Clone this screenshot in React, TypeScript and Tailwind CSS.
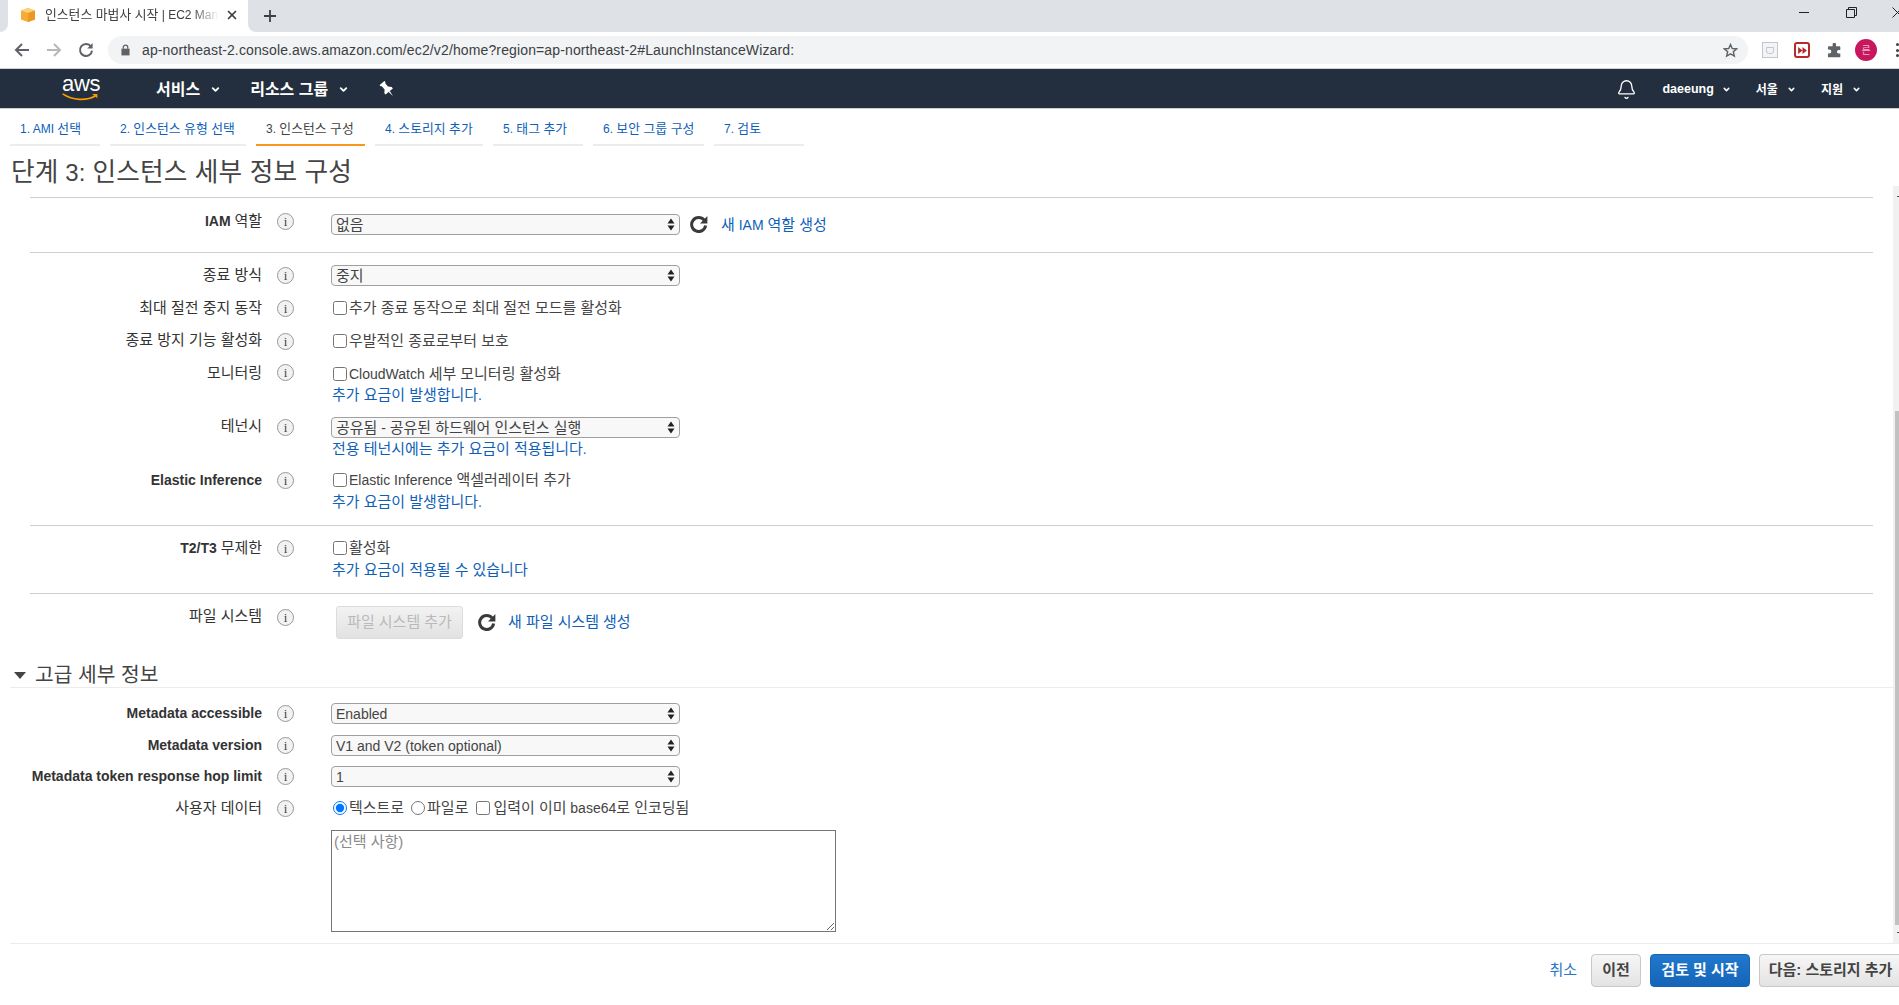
import { Bell, ChevronDown, X } from "lucide-react";
import type { ReactNode } from "react";

const fontStack = "font-['Liberation_Sans','Noto_Sans_CJK_KR',sans-serif]";

const steps = [
  { label: "1. AMI 선택", width: "w-[90px]" },
  { label: "2. 인스턴스 유형 선택", width: "w-[136px]" },
  { label: "3. 인스턴스 구성", width: "w-[109px]", active: true },
  { label: "4. 스토리지 추가", width: "w-[108px]" },
  { label: "5. 태그 추가", width: "w-[90px]" },
  { label: "6. 보안 그룹 구성", width: "w-[111px]" },
  { label: "7. 검토", width: "w-[90px]" },
];

// hangul runs come out narrower than the reference's font, latin runs don't
function Txt({ text }: { text: string }) {
  const parts = text.split(/([가-힣]+(?:\s+[가-힣]+)*)/);
  return (
    <>
      {parts.map((part, i) =>
        i % 2 === 1 ? (
          <span key={i} className="text-[1.07em] font-normal">
            {part}
          </span>
        ) : (
          <span key={i}>{part}</span>
        ),
      )}
    </>
  );
}

function InfoIcon() {
  return (
    <span className="flex h-[17px] w-[17px] shrink-0 items-center justify-center rounded-full border border-[#999] bg-[#f2f2f2] font-['Liberation_Serif',serif] text-[13px] leading-none text-[#444]">
      i
    </span>
  );
}

function Refresh() {
  return (
    <svg viewBox="0 0 18 18" className="-mt-px h-[18px] w-[18px] shrink-0" fill="none">
      <path d="M14.2 5.2A7 7 0 1 0 15.6 10.5" stroke="#3a3a3a" strokeWidth="3" />
      <path d="M17.4 1v7.4H10z" fill="#3a3a3a" />
    </svg>
  );
}

function Row({
  label,
  height,
  labelTop = "",
  iconTop = "",
  children,
}: {
  label?: string;
  height: string;
  labelTop?: string;
  iconTop?: string;
  children?: ReactNode;
}) {
  return (
    <div className={`flex ${height}`}>
      <div className="w-[262px] shrink-0">
        <div className={`flex justify-end whitespace-nowrap text-[14px] font-bold leading-[18px] text-[#333] ${labelTop}`}>
          {label ? <span><Txt text={label} /></span> : null}
        </div>
      </div>
      <div className={`flex w-[69px] shrink-0 items-start pl-[15px] ${iconTop}`}>{label ? <InfoIcon /> : null}</div>
      <div className="min-w-0 flex-1">{children}</div>
    </div>
  );
}

function Select({ value }: { value: string }) {
  return (
    <div className="flex h-[21px] w-[349px] items-center justify-between rounded-[4px] border border-[#a0a0a0] bg-[#f8f8f8] pl-[4px] pr-[4px] text-[14px] text-[#444]">
      <span className="pt-px"><Txt text={value} /></span>
      <svg viewBox="0 0 8 12" className="h-[13px] w-[8px]">
        <path d="M4 0l3.5 5H.5zM4 12L.5 7h7z" fill="#222" />
      </svg>
    </div>
  );
}

function Check({ label }: { label: string }) {
  return (
    <label className="flex items-center text-[14px] leading-[18px] text-[#444]">
      <input type="checkbox" className="ml-[2px] mr-[2px] h-[14px] w-[14px]" />
      <span><Txt text={label} /></span>
    </label>
  );
}

function Note({ text }: { text: string }) {
  return (
    <div className="pl-px text-[14px] leading-[18px] text-[#0f5fb8]">
      <Txt text={text} />
    </div>
  );
}

function Divider() {
  return <div className="ml-[30px] mr-[20px] h-px bg-[#cfcfcf]" />;
}

export default function App() {
  return (
    <div className={`flex h-[1005px] w-[1899px] flex-col overflow-hidden bg-white ${fontStack}`}>
      {/* browser tab strip */}
      <div className="flex h-[32px] shrink-0 bg-white">
        <div className="h-[32px] w-[8px] rounded-br-[8px] bg-[#dee1e6]" />
        <div className="flex h-[32px] w-[240px] items-center bg-white pb-[2px] pl-[12px] pr-[9px] text-[12px] text-[#3c4043]">
          <svg viewBox="0 0 16 16" className="mr-[9px] h-[16px] w-[16px] shrink-0">
            <path d="M1 3.5 8 1l7 2.5v9L8 15l-7-2.5z" fill="#f5ab35" />
            <path d="M1 3.5 8 6l7-2.5L8 1z" fill="#fad27f" />
            <path d="M8 6v9l7-2.5v-9z" fill="#ea9a22" />
          </svg>
          <span className="min-w-0 flex-1 overflow-hidden whitespace-nowrap [mask-image:linear-gradient(to_right,black_85%,transparent)]">
            <Txt text="인스턴스 마법사 시작 | EC2 Man" />
          </span>
          <X className="ml-[6px] h-[14px] w-[14px] shrink-0 text-[#3c4043]" strokeWidth={3} />
        </div>
        <div className="flex h-[32px] flex-1 rounded-bl-[8px] bg-[#dee1e6]">
          <div className="flex h-[31px] w-[44px] items-center justify-center">
            <svg viewBox="0 0 12 12" className="h-[12px] w-[12px]">
              <path d="M6 0v12M0 6h12" stroke="#3c4043" strokeWidth="1.8" />
            </svg>
          </div>
          <div className="flex-1" />
          <div className="flex h-[25px] items-center">
            <div className="mr-[37px] h-px w-[10px] bg-[#222]" />
            <svg viewBox="0 0 11 11" className="mr-[35px] h-[11px] w-[11px]" fill="none" stroke="#222">
              <path d="M.5 2.5h8v8h-8zM2.5 2.5v-2h8v8h-2" />
            </svg>
            <svg viewBox="0 0 11 11" className="mr-[-4px] h-[11px] w-[11px]" stroke="#222">
              <path d="M.5.5l10 10M10.5.5l-10 10" />
            </svg>
          </div>
        </div>
      </div>

      {/* browser toolbar */}
      <div className="flex h-[37px] shrink-0 items-center border-b border-[#cfd1d4] bg-white">
        <div className="flex w-[108px] shrink-0 items-center pl-[14px]">
          <svg viewBox="0 0 16 16" className="mr-[16px] h-[16px] w-[16px]" fill="none" stroke="#5f6368" strokeWidth="2">
            <path d="M15 8H2M8 2 2 8l6 6" />
          </svg>
          <svg viewBox="0 0 16 16" className="mr-[16px] h-[16px] w-[16px]" fill="none" stroke="#b6b8bb" strokeWidth="2">
            <path d="M1 8h13M8 2l6 6-6 6" />
          </svg>
          <svg viewBox="0 0 16 16" className="h-[16px] w-[16px]" fill="none">
            <path d="M13 4.6A6 6 0 1 0 14 8.6" stroke="#5f6368" strokeWidth="2" />
            <path d="M14.6 1v5.4H9.2z" fill="#5f6368" />
          </svg>
        </div>
        <div className="flex h-[28px] w-[1640px] shrink-0 items-center rounded-full bg-[#f1f3f4] pl-[13px] pr-[10px] text-[14px] text-[#3c4043]">
          <svg viewBox="0 0 10 13" className="mr-[12px] h-[12px] w-[9px] shrink-0">
            <path d="M2.5 5V3.5a2.5 2.5 0 0 1 5 0V5" fill="none" stroke="#5f6368" strokeWidth="1.4" />
            <path d="M.5 5h9v7.5h-9z" fill="#5f6368" />
          </svg>
          <span className="flex-1 tracking-[0.13px]">ap-northeast-2.console.aws.amazon.com/ec2/v2/home?region=ap-northeast-2#LaunchInstanceWizard:</span>
          <svg viewBox="0 0 16 16" className="h-[15px] w-[15px]" fill="none" stroke="#5f6368" strokeWidth="1.5">
            <path d="m8 1.6 1.9 4.3 4.6.4-3.5 3 1.1 4.6L8 11.5l-4.1 2.4L5 9.3l-3.5-3 4.6-.4z" />
          </svg>
        </div>
        <div className="ml-[14px] flex h-[16px] w-[16px] shrink-0 items-center justify-center border border-[#c4c7ca] bg-[#f3f4f5]">
          <div className="h-[7px] w-[8px] rounded-b-[3px] border border-[#c4c7ca]" />
        </div>
        <div className="ml-[16px] flex h-[16px] w-[16px] shrink-0 items-center justify-center rounded-[3px] border-2 border-[#b72a2a] bg-white">
          <svg viewBox="0 0 10 8" className="h-[7px] w-[9px]">
            <path d="M0 0l5 4-5 4zM5 0l5 4-5 4z" fill="#b72a2a" />
          </svg>
        </div>
        <svg viewBox="0 0 16 16" className="ml-[17px] h-[15px] w-[15px] shrink-0">
          <path d="M6 1.5a1.8 1.8 0 0 1 3.6 0V3.5h3.6a1 1 0 0 1 1 1v3h-1.7a1.9 1.9 0 0 0 0 3.8h1.7v3a1 1 0 0 1-1 1H2a1 1 0 0 1-1-1v-3.2h1.5a2.1 2.1 0 0 0 0-4.2H1V4.5a1 1 0 0 1 1-1h4z" fill="#5f6368" />
        </svg>
        <div className="ml-[13px] flex h-[22px] w-[22px] shrink-0 items-center justify-center rounded-full bg-[#c8175d] text-[10px] text-[#f6b9d0]">
          른
        </div>
        <div className="ml-[19px] flex h-[14px] shrink-0 flex-col justify-between">
          <div className="h-[3px] w-[3px] rounded-full bg-[#3c4043]" />
          <div className="h-[3px] w-[3px] rounded-full bg-[#3c4043]" />
          <div className="h-[3px] w-[3px] rounded-full bg-[#3c4043]" />
        </div>
      </div>

      {/* aws console nav */}
      <div className="flex h-[40px] shrink-0 items-center border-b border-[#c9cbce] bg-[#232f3e] pt-[2px] text-white">
        <div className="ml-[60px] flex w-[96px] shrink-0 flex-col pb-[2px]">
          <div className="ml-[2px] h-[17px] font-['Liberation_Sans',sans-serif] text-[22px] leading-[15px] tracking-[-0.3px]">aws</div>
          <svg viewBox="0 0 42 9" className="h-[8px] w-[41px]" fill="none">
            <path d="M1 1c11 7.5 27 8 37 2" stroke="#f90" strokeWidth="2" />
            <path d="M34 1h6v5z" fill="#f90" />
          </svg>
        </div>
        <span className="text-[16px] font-bold">서비스</span>
        <ChevronDown className="ml-[10px] h-[11px] w-[11px]" strokeWidth={4} />
        <span className="ml-[29px] text-[16px] font-bold">리소스 그룹</span>
        <ChevronDown className="ml-[10px] h-[11px] w-[11px]" strokeWidth={4} />
        <svg viewBox="0 0 16 16" className="ml-[30px] h-[17px] w-[17px]">
          <g transform="rotate(-40 8 8)" fill="white">
            <path d="M5 0h6v1.4l-.9.8v4l2.4 2.6V10.500H3.500V8.800l2.400-2.600v-4L5 1.400z" />
            <path d="M7.300 10.500h1.400L8 16z" />
          </g>
        </svg>
        <div className="flex-1" />
        <Bell className="h-[21px] w-[21px]" strokeWidth={1.5} />
        <span className="ml-[25px] text-[12.5px] font-bold">daeeung</span>
        <ChevronDown className="ml-[8px] h-[9px] w-[9px]" strokeWidth={4} />
        <span className="ml-[25px] text-[12px] font-bold">서울</span>
        <ChevronDown className="ml-[9px] h-[9px] w-[9px]" strokeWidth={4} />
        <span className="ml-[25px] text-[12px] font-bold">지원</span>
        <ChevronDown className="ml-[9px] h-[9px] w-[9px]" strokeWidth={4} />
        <div className="w-[38px]" />
      </div>

      {/* wizard steps */}
      <div className="flex h-[37px] shrink-0 gap-[10px] pl-[10px]">
        {steps.map((step) => (
          <div
            key={step.label}
            className={`flex ${step.width} items-center border-b-2 pl-[10px] pt-[5px] text-[12px] ${
              step.active ? "border-[#f7981d] text-[#444]" : "border-[#ececec] text-[#0f5fb8]"
            }`}
          >
            <span><Txt text={step.label} /></span>
          </div>
        ))}
      </div>

      <div className="flex min-h-0 flex-1">
        <div className="flex min-w-0 flex-1 flex-col">
          <h1 className="h-[51px] shrink-0 pl-[11px] pt-[8px] text-[24px] font-normal leading-[36px] tracking-[0.15px] text-[#444]">
            <Txt text="단계 3: 인스턴스 세부 정보 구성" />
          </h1>

          {/* form area */}
          <div className="min-h-0 flex-1">
            <Divider />
            <div className="h-[15px]" />
            <Row label="IAM 역할" height="h-[39px]" labelTop="-mt-px">
              <div className="flex items-center">
                <Select value="없음" />
                <div className="ml-[10px]"><Refresh /></div>
                <span className="ml-[13px] pt-px text-[14px] text-[#0f5fb8]"><Txt text="새 IAM 역할 생성" /></span>
              </div>
            </Row>
            <Divider />
            <div className="h-[12px]" />
            <Row label="종료 방식" height="h-[33px]" labelTop="pt-px" iconTop="pt-[2px]">
              <Select value="중지" />
            </Row>
            <Row label="최대 절전 중지 동작" height="h-[33px]" labelTop="pt-px" iconTop="pt-[2px]">
              <div className="mt-px"><Check label="추가 종료 동작으로 최대 절전 모드를 활성화" /></div>
            </Row>
            <Row label="종료 방지 기능 활성화" height="h-[33px]" iconTop="pt-[2px]">
              <div className="mt-px"><Check label="우발적인 종료로부터 보호" /></div>
            </Row>
            <Row label="모니터링" height="h-[53px]">
              <div className="mt-px"><Check label="CloudWatch 세부 모니터링 활성화" /></div>
              <div className="mt-[3px]"><Note text="추가 요금이 발생합니다." /></div>
            </Row>
            <Row label="테넌시" height="h-[54px]" iconTop="pt-[2px]">
              <Select value="공유됨 - 공유된 하드웨어 인스턴스 실행" />
              <div className="mt-[2px]"><Note text="전용 테넌시에는 추가 요금이 적용됩니다." /></div>
            </Row>
            <Row label="Elastic Inference" height="h-[54px]" iconTop="pt-px">
              <Check label="Elastic Inference 액셀러레이터 추가" />
              <div className="mt-[4px]"><Note text="추가 요금이 발생합니다." /></div>
            </Row>
            <Divider />
            <div className="h-[14px]" />
            <Row label="T2/T3 무제한" height="h-[53px]" labelTop="-mt-px">
              <div className="-mt-px"><Check label="활성화" /></div>
              <div className="mt-[4px]"><Note text="추가 요금이 적용될 수 있습니다" /></div>
            </Row>
            <Divider />
            <div className="h-[14px]" />
            <Row label="파일 시스템" height="h-[48px]" labelTop="-mt-px" iconTop="pt-px">
              <div className="-mt-[2px] flex items-center pl-[5px]">
                <div className="flex h-[33px] w-[127px] items-center justify-center rounded-[3px] border border-[#dcdcdc] bg-[linear-gradient(#f2f2f2,#e2e2e2)] text-[14px] text-[#b9b9b9]">
                  <span><Txt text="파일 시스템 추가" /></span>
                </div>
                <div className="ml-[15px]"><Refresh /></div>
                <span className="ml-[12px] text-[14px] text-[#0f5fb8]"><Txt text="새 파일 시스템 생성" /></span>
              </div>
            </Row>
            <div className="ml-[10px] flex h-[32px] items-center border-b border-[#ececec] pt-[8px]">
              <div className="ml-[4px] h-0 w-0 border-x-[6px] border-t-[7px] border-x-transparent border-t-[#444]" />
              <span className="ml-[9px] text-[19px] text-[#444]"><Txt text="고급 세부 정보" /></span>
            </div>
            <div className="h-[15px]" />
            <Row label="Metadata accessible" height="h-[32px]" labelTop="pt-px" iconTop="pt-[2px]"><Select value="Enabled" /></Row>
            <Row label="Metadata version" height="h-[31px]" labelTop="pt-px" iconTop="pt-[2px]"><Select value="V1 and V2 (token optional)" /></Row>
            <Row label="Metadata token response hop limit" height="h-[32px]" labelTop="pt-px" iconTop="pt-[2px]"><Select value="1" /></Row>
            <Row label="사용자 데이터" height="h-[32px]" labelTop="pt-px" iconTop="pt-[2px]">
              <div className="mt-px flex items-center text-[14px] leading-[18px] text-[#444]">
                <input type="radio" name="userdata" defaultChecked className="ml-[2px] mr-[2px] h-[14px] w-[14px]" />
                <span><Txt text="텍스트로" /></span>
                <input type="radio" name="userdata" className="ml-[7px] mr-[2px] h-[14px] w-[14px]" />
                <span><Txt text="파일로" /></span>
                <input type="checkbox" className="ml-[8px] mr-[3px] h-[14px] w-[14px]" />
                <span><Txt text="입력이 이미 base64로 인코딩됨" /></span>
              </div>
            </Row>
            <Row height="h-[113px]">
              <textarea
                placeholder="(선택 사항)"
                className="block h-[102px] w-[505px] resize-y border border-[#767676] p-[2px] text-[15px] leading-[18px] text-[#444] placeholder:text-[#8a8a8a]"
              />
            </Row>
          </div>
        </div>

        {/* page scrollbar */}
        <div className="mt-[40px] flex w-[6px] shrink-0 flex-col bg-[#f1f1f1]">
          <div className="mt-[10px] ml-[4px] h-px w-[2px] bg-[#555]" />
          <div className="h-[214px]" />
          <div className="ml-[2px] h-[514px] w-[4px] bg-[#c1c1c1]" />
          <div className="mt-[7px] ml-[4px] h-px w-[2px] bg-[#555]" />
        </div>
      </div>

      {/* wizard footer */}
      <div className="ml-[10px] flex h-[62px] shrink-0 items-start justify-end border-t border-[#ececec] pt-[10px] text-[15px] font-bold">
        <span className="mr-[14px] flex h-[33px] items-center font-normal text-[#2a73c5]">취소</span>
        <div className="flex h-[33px] w-[50px] items-center justify-center rounded-[4px] border border-[#c9c9c9] bg-[linear-gradient(#f6f6f6,#e3e3e3)] text-[#444]">이전</div>
        <div className="ml-[9px] flex h-[33px] w-[100px] items-center justify-center rounded-[4px] border border-[#1266b5] bg-[linear-gradient(#2178cc,#1565b8)] text-white">검토 및 시작</div>
        <div className="ml-[9px] flex h-[33px] w-[140px] items-center justify-center whitespace-nowrap rounded-l-[4px] border border-r-0 border-[#c9c9c9] bg-[linear-gradient(#f6f6f6,#e3e3e3)] pl-[2px] text-[#444]">다음: 스토리지 추가</div>
      </div>
    </div>
  );
}
